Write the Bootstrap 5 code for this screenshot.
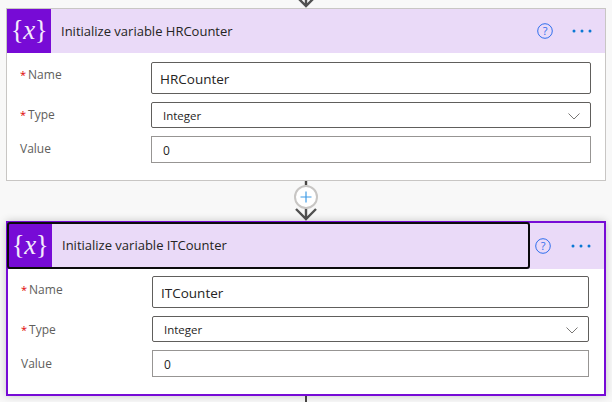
<!DOCTYPE html>
<html><head><meta charset="utf-8">
<link href="https://cdn.jsdelivr.net/npm/bootstrap@5.3.0/dist/css/bootstrap.min.css" rel="stylesheet">
<style>
html,body{height:402px;overflow:hidden;background:#f8f8f8;font-family:"Open Sans","Noto Sans",sans-serif;color:#252423}
.flow-wrap{padding:0 6px}
.joint{display:block;margin:0 auto;overflow:hidden}
.step-box{background:#fff;border:1px solid #c8c6c4;height:173px}
.step-head{background:#eadaf8;height:44px}
.step-icon{width:44px;height:44px;background:#770bd6;flex:none}
.step-title{font-size:13px;margin-left:10px;color:#252423;line-height:44px}
.step-help{margin-left:auto;margin-right:19px}
.step-more{margin-right:13px}
.step-fields{padding:9px 14px 0 13px}
.field-line{display:flex;margin-bottom:8px}
.field-name{width:131px;font-size:12px;color:#605e5c;padding-top:4px;line-height:18px}
.req{color:#e00000;font-size:11px;margin-right:2px}
.field-input{flex:1;border:1px solid #605e5c;border-radius:2px;display:flex;align-items:center;color:#252423;background:#fff;padding-top:2px}
.big{height:32px;font-size:13.5px;padding-left:8px}
.mid{height:26px;font-size:11.5px;padding-left:11px;justify-content:space-between;padding-right:10px}
.low{height:27px;font-size:12px;padding-left:11px;border-color:#979593;border-radius:0}
.selected{border:2px solid #770bd6;height:175px;box-shadow:0 0 8px rgba(0,0,0,.2);position:relative}
.selected .step-head{height:46px;position:relative}
.focus-ring-box{position:absolute;left:-1px;top:-1px;width:523px;height:47px;border:2px solid #0b0a0c;border-radius:3px;pointer-events:none}
.selected .step-icon{height:46px;width:44px}
.selected .step-help{margin-right:20px}
.selected .step-more{margin-right:13px}
.selected .step-fields{padding:7px 15px 0 13px}
.selected .step-title{line-height:44px;padding-bottom:2px;margin-left:10px}
.selected .field-name{padding-top:5px}
</style></head>
<body>
<div class="flow-wrap">
<svg class="joint" width="24" height="8" viewBox="0 0 24 8"><path d="M12 -4 V6 M2 -4 L12 6 L22 -4" fill="none" stroke="#505050" stroke-width="2.4"/></svg>
<div class="step-box">
  <div class="step-head d-flex align-items-center">
    <div class="step-icon"><svg width="44" height="44" viewBox="0 0 44 44"><text x="22" y="30" text-anchor="middle" font-family="Liberation Serif" font-size="27" fill="#f4eafc" letter-spacing="-.5">{<tspan font-style="italic">x</tspan>}</text></svg></div>
    <div class="step-title">Initialize variable HRCounter</div>
    <svg class="step-help" width="16" height="16" viewBox="0 0 16 16"><circle cx="8" cy="8" r="7.3" fill="none" stroke="#2f6fed" stroke-width="1"/><text x="8" y="12" text-anchor="middle" font-size="11" fill="#2f6fed" font-family="Open Sans">?</text></svg>
    <svg class="step-more" width="20" height="4" viewBox="0 0 20 4"><circle cx="2" cy="2" r="1.5" fill="#0a78d4"/><circle cx="10" cy="2" r="1.5" fill="#0a78d4"/><circle cx="18" cy="2" r="1.5" fill="#0a78d4"/></svg>
  </div>
  <div class="step-fields">
    <div class="field-line"><div class="field-name"><span class="req">*</span>Name</div><div class="field-input big">HRCounter</div></div>
    <div class="field-line"><div class="field-name"><span class="req">*</span>Type</div><div class="field-input mid">Integer<svg width="12" height="7" viewBox="0 0 12 7"><path d="M.5 .5 L6 6 L11.5 .5" fill="none" stroke="#797775"/></svg></div></div>
    <div class="field-line"><div class="field-name">Value</div><div class="field-input low">0</div></div>
  </div>
</div>
<svg class="joint" width="30" height="40" viewBox="0 0 30 40"><path d="M15 0 V4" stroke="#484644" stroke-width="2.4"/><path d="M15 26 V38 M5 28 L15 38 L25 28" fill="none" stroke="#505050" stroke-width="2.4"/><circle cx="15" cy="16" r="11" fill="#fff" stroke="#c8c6c4" stroke-width="2"/><path d="M9.5 16 H20.5 M15 10.5 V21.5" stroke="#3f9ce6" stroke-width="1.2"/></svg>
<div class="step-box selected">
  <div class="step-head d-flex align-items-center">
    <div class="step-icon"><svg width="44" height="46" viewBox="0 0 44 46"><text x="22" y="31" text-anchor="middle" font-family="Liberation Serif" font-size="27" fill="#f4eafc" letter-spacing="-.5">{<tspan font-style="italic">x</tspan>}</text></svg></div>
    <div class="step-title">Initialize variable ITCounter</div>
    <svg class="step-help" width="16" height="16" viewBox="0 0 16 16"><circle cx="8" cy="8" r="7.3" fill="none" stroke="#2f6fed" stroke-width="1"/><text x="8" y="12" text-anchor="middle" font-size="11" fill="#2f6fed" font-family="Open Sans">?</text></svg>
    <svg class="step-more" width="20" height="4" viewBox="0 0 20 4"><circle cx="2" cy="2" r="1.5" fill="#0a78d4"/><circle cx="10" cy="2" r="1.5" fill="#0a78d4"/><circle cx="18" cy="2" r="1.5" fill="#0a78d4"/></svg>
    <div class="focus-ring-box"></div>
  </div>
  <div class="step-fields">
    <div class="field-line"><div class="field-name"><span class="req">*</span>Name</div><div class="field-input big">ITCounter</div></div>
    <div class="field-line"><div class="field-name"><span class="req">*</span>Type</div><div class="field-input mid">Integer<svg width="12" height="7" viewBox="0 0 12 7"><path d="M.5 .5 L6 6 L11.5 .5" fill="none" stroke="#797775"/></svg></div></div>
    <div class="field-line"><div class="field-name">Value</div><div class="field-input low">0</div></div>
  </div>
</div>
<svg class="joint" width="4" height="6" viewBox="0 0 4 6"><path d="M2 0 V6" stroke="#484644" stroke-width="2"/></svg>
</div>
<script src="https://cdn.jsdelivr.net/npm/bootstrap@5.3.0/dist/js/bootstrap.bundle.min.js"></script>
</body></html>
